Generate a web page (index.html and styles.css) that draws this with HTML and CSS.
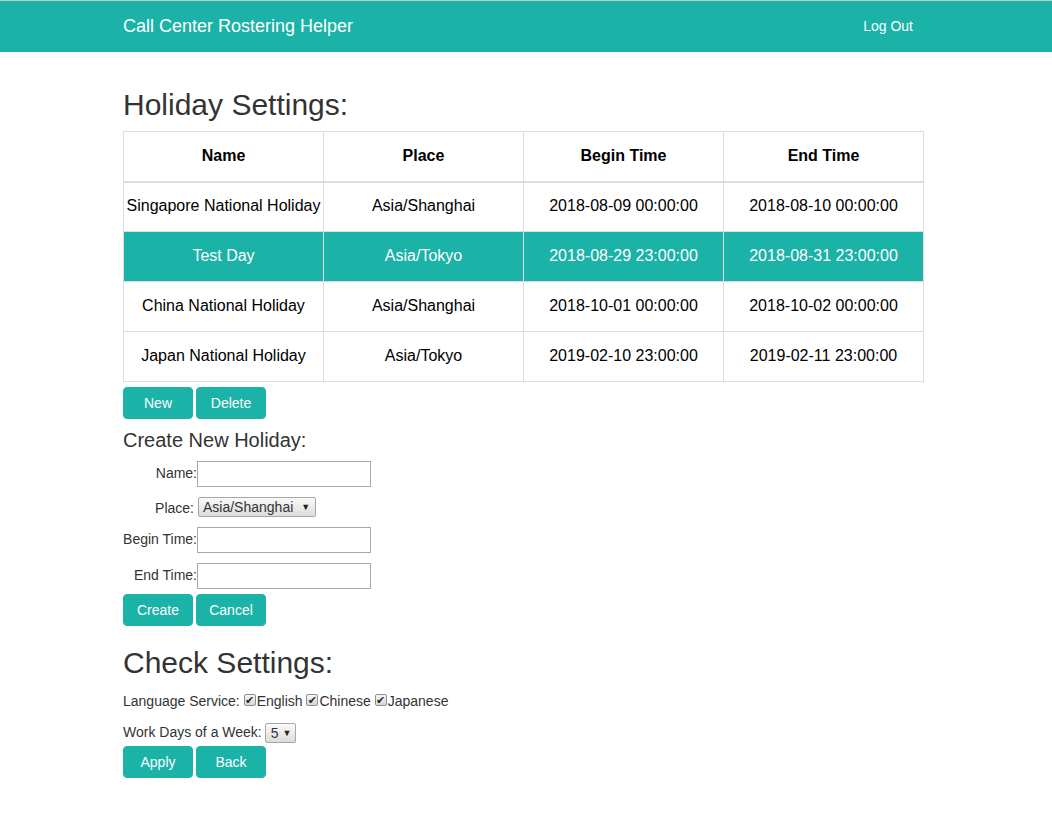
FILE: index.html
```html
<!DOCTYPE html>
<html>
<head>
<meta charset="utf-8">
<title>Call Center Rostering Helper</title>
<link rel="stylesheet" href="styles.css">
</head>
<body>
<nav class="navbar">
  <div class="nav-inner">
    <span class="brand">Call Center Rostering Helper</span>
    <a class="logout" href="#">Log Out</a>
  </div>
</nav>
<main class="container">
  <h2 class="page-title">Holiday Settings:</h2>
  <table class="holidays">
    <thead>
      <tr><th>Name</th><th>Place</th><th>Begin Time</th><th>End Time</th></tr>
    </thead>
    <tbody>
      <tr><td>Singapore National Holiday</td><td>Asia/Shanghai</td><td>2018-08-09 00:00:00</td><td>2018-08-10 00:00:00</td></tr>
      <tr class="selected"><td>Test Day</td><td>Asia/Tokyo</td><td>2018-08-29 23:00:00</td><td>2018-08-31 23:00:00</td></tr>
      <tr><td>China National Holiday</td><td>Asia/Shanghai</td><td>2018-10-01 00:00:00</td><td>2018-10-02 00:00:00</td></tr>
      <tr><td>Japan National Holiday</td><td>Asia/Tokyo</td><td>2019-02-10 23:00:00</td><td>2019-02-11 23:00:00</td></tr>
    </tbody>
  </table>
  <div class="btn-row first">
    <button class="btn">New</button>
    <button class="btn">Delete</button>
  </div>
  <h4 class="sub-title">Create New Holiday:</h4>
  <form class="holiday-form">
    <label class="lbl">Name:</label><input class="txt" type="text">
    <label class="lbl lbl-sp">Place:</label><span class="sel"><span class="sel-text">Asia/Shanghai</span><span class="arrow">▼</span></span>
    <label class="lbl">Begin Time:</label><input class="txt" type="text">
    <label class="lbl">End Time:</label><input class="txt" type="text">
  </form>
  <div class="btn-row">
    <button class="btn">Create</button>
    <button class="btn">Cancel</button>
  </div>
  <h2 class="page-title second">Check Settings:</h2>
  <div class="check-line">Language Service: <span class="cb">✔</span>English <span class="cb">✔</span>Chinese <span class="cb">✔</span>Japanese</div>
  <div class="check-line days">Work Days of a Week: <span class="sel small"><span class="sel-text">5</span><span class="arrow">▼</span></span></div>
  <div class="btn-row last">
    <button class="btn">Apply</button>
    <button class="btn">Back</button>
  </div>
</main>
</body>
</html>
```
FILE: styles.css
```css
* { box-sizing: border-box; }
html, body { margin: 0; padding: 0; background: #fff; }
body {
  font-family: "Liberation Sans", Arial, sans-serif;
  font-size: 14px;
  color: #333;
  line-height: 1.42857;
}
.navbar {
  background: #1bb2a8;
  border-top: 1px solid #c9c9c9;
  height: 52px;
}
.nav-inner {
  width: 806px;
  margin: 0 auto;
  height: 50px;
  display: flex;
  align-items: center;
  justify-content: space-between;
  padding: 0 16px 0 0;
}
.brand { color: #fff; font-size: 18px; line-height: 20px; }
.logout { color: #fff; font-size: 14px; text-decoration: none; padding-top: 1px; }

.container { width: 806px; margin: 0 auto; }
.page-title {
  font-size: 30px;
  font-weight: 500;
  line-height: 33px;
  margin: 36px 0 10px;
  color: #333;
}
.page-title.second { margin: 20px 0 12px; }

.holidays {
  width: 801px;
  table-layout: fixed;
  border-collapse: collapse;
  font-size: 16px;
  color: #000;
}
.holidays th, .holidays td {
  border: 1px solid #ddd;
  text-align: center;
  vertical-align: middle;
  height: 50px;
  padding: 0 2px;
  white-space: nowrap;
}
.holidays th { font-weight: bold; }
.holidays thead th { border-bottom: 2px solid #ddd; height: 50px; }
.holidays tr.selected td { background: #1bb2a8; color: #fff; }

.btn-row { display: flex; gap: 3px; margin-top: 5px; }
.btn {
  width: 70px;
  height: 32px;
  background: #1bb2a8;
  border: 1px solid #1bb2a8;
  border-radius: 4px;
  color: #fff;
  font-family: inherit;
  font-size: 14px;
  padding: 0;
}
.sub-title {
  font-size: 20px;
  font-weight: 500;
  line-height: 22px;
  margin: 10px 0 10px;
  color: #333;
}
.holiday-form {
  display: grid;
  grid-template-columns: 74px auto;
  align-items: center;
  justify-items: start;
  row-gap: 10px;
  margin: 0;
}
.lbl { justify-self: end; font-size: 14px; color: #333; }
.lbl-sp { padding-right: 3px; padding-top: 2px; line-height: 18px; }
.txt {
  width: 174px;
  height: 26px;
  border: 1px solid #a9a9a9;
  padding: 1px 2px;
  font-family: inherit;
  font-size: 14px;
  margin: 0;
}
.sel {
  display: inline-flex;
  align-items: center;
  height: 20px;
  border: 1px solid #a6a6a6;
  border-radius: 2px;
  background: linear-gradient(#fafafa, #dcdcdc);
  padding: 0 5px 0 4px;
  font-size: 14px;
  color: #333;
  vertical-align: middle;
  line-height: 18px;
}
.holiday-form .sel { margin-left: 1px; }
.sel .arrow { font-size: 9px; margin-left: 8px; color: #222; }
.sel.small .arrow { margin-left: 4px; }
.sel.small { padding: 0 4px 0 5px; margin-left: -1px; }
.check-line { font-size: 14px; color: #333; line-height: 20px; }
.check-line.days { margin-top: 11px; }
.cb {
  display: inline-block;
  width: 12px;
  height: 12px;
  border: 1px solid #8f8f8f;
  border-radius: 2px;
  background: linear-gradient(#f6f6f6, #d6d6d6);
  font-size: 11px;
  font-weight: bold;
  line-height: 11px;
  text-align: center;
  color: #2a2a2a;
  vertical-align: 0px;
  margin: 0 1px 0 0;
  overflow: hidden;
  font-family: "DejaVu Sans", sans-serif;
}
.btn-row.last { margin-top: 3px; }
```
